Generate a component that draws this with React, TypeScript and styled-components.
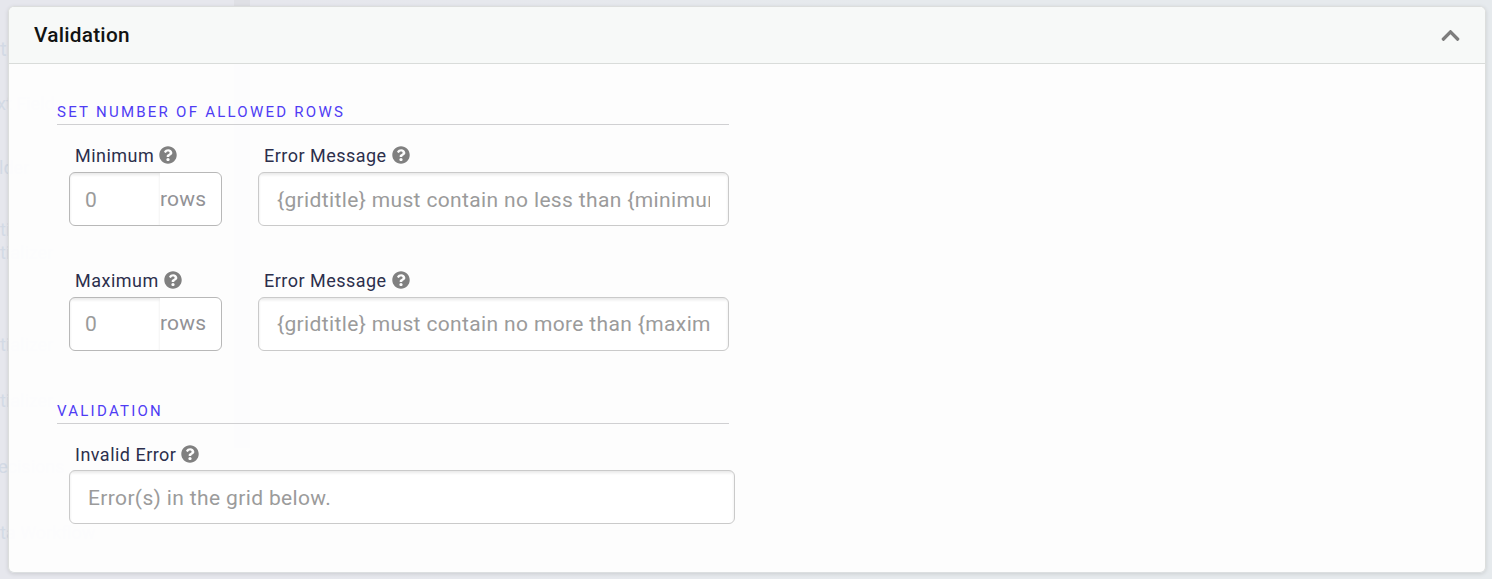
import React from 'react';
import styled, { createGlobalStyle } from 'styled-components';
import { FaQuestionCircle, FaChevronUp } from 'react-icons/fa';

const GlobalStyle = createGlobalStyle`
  *, *::before, *::after { box-sizing: border-box; }
  body {
    margin: 0;
    overflow: hidden;
    font-family: Roboto, sans-serif;
    background: linear-gradient(90deg, #e6e7ed 0, #e6e7ed 265px, #e6eaed 900px);
  }
`;

const Page = styled.div`
  position: relative;
  height: 579px;
  padding: 6px 6px 6px 8px;
`;

const Backdrop = styled.div`
  position: absolute;
  inset: 0;
  overflow: hidden;
`;

const BackdropStrip = styled.div`
  position: absolute;
  left: 234px;
  top: 0;
  width: 16px;
  height: 448px;
  background: #dfe0e5;
`;

const BackdropText = styled.span<{ $x: number; $y: number; $size?: number }>`
  position: absolute;
  left: ${(p) => p.$x}px;
  top: ${(p) => p.$y}px;
  font-size: ${(p) => p.$size ?? 18}px;
  line-height: 20px;
  white-space: nowrap;
  color: #d3dae5;
`;

const Card = styled.section`
  position: relative;
  height: 567px;
  border-radius: 6px;
  border: 1px solid #dcdedd;
  border-bottom-color: #dcdfe0;
  background: rgba(253, 253, 253, 0.97);
  box-shadow: 0 1px 4px rgba(0, 0, 0, 0.12);
`;

const Header = styled.header`
  display: flex;
  align-items: center;
  justify-content: space-between;
  height: 57px;
  padding: 0 24px 1px 25px;
  border-bottom: 1px solid #d9dcda;
  border-radius: 5px 5px 0 0;
  background: #f7f9f8;
`;

const Title = styled.h2`
  margin: 0;
  font-size: 20.8px;
  font-weight: 500;
  letter-spacing: 0.25px;
  line-height: 28px;
  color: #111312;
`;

const Chevron = styled(FaChevronUp)`
  width: 21px;
  height: 21px;
  margin-top: 1px;
  color: #7d7d7d;
`;

const Content = styled.div`
  width: 720px;
  padding: 36px 0 0 48px;
`;

const SectionTitle = styled.h3`
  margin: 0;
  height: 25px;
  border-bottom: 1px solid #d0d0d2;
  font-size: 15px;
  font-weight: 400;
  letter-spacing: 2.25px;
  line-height: 25px;
  text-transform: uppercase;
  color: #4f3cf4;
`;

const FieldRow = styled.div<{ $gapBelow?: number }>`
  display: flex;
  gap: 36px;
  padding: 18px 0 0 12px;
  margin-bottom: ${(p) => p.$gapBelow ?? 0}px;
`;

const Field = styled.div<{ $width: number }>`
  flex: 0 0 ${(p) => p.$width}px;
  width: ${(p) => p.$width}px;
  min-width: 0;
`;

const Label = styled.label<{ $tight?: boolean }>`
  display: flex;
  align-items: center;
  gap: 5px;
  height: ${(p) => (p.$tight ? 28 : 29)}px;
  padding: 0 0 ${(p) => (p.$tight ? 3 : 4)}px 6px;
  font-size: 18px;
  letter-spacing: 0.48px;
  line-height: 25px;
  color: #2c2f4c;
`;

const HelpIcon = styled(FaQuestionCircle)`
  width: 18px;
  height: 18px;
  margin-bottom: 2px;
  color: #808080;
`;

const Control = styled.div<{ $strong?: boolean }>`
  display: flex;
  height: 54px;
  overflow: hidden;
  border: 1px solid ${(p) => (p.$strong ? '#b8b8b8' : '#cacaca')};
  border-radius: 6px;
  background: #fff;
`;

const Input = styled.input<{ $inset: number; $drop?: number }>`
  flex: 1;
  min-width: 0;
  padding: ${(p) => p.$drop ?? 0}px ${(p) => p.$inset}px 0;
  border: 0;
  outline: 0;
  font: 400 21px Roboto, sans-serif;
  letter-spacing: 0.36px;
  color: #2c2f4c;
  background: transparent;
  box-shadow: inset 0 2px 3px rgba(0, 0, 0, 0.09);
  &::placeholder { color: #9b9b9b; opacity: 1; }
`;

const Suffix = styled.span<{ $lift?: number }>`
  width: 61px;
  font-size: 21px;
  letter-spacing: 0.2px;
  line-height: ${(p) => 52 - 2 * (p.$lift ?? 0)}px;
  color: #929296;
`;

const behind = [
  { text: 'tly', x: 0, y: 39, size: 20 },
  { text: 'xt Field', x: -3, y: 94 },
  { text: 'lder', x: -1, y: 158 },
  { text: 'ti', x: 0, y: 220 },
  { text: 'tializer', x: 0, y: 243 },
  { text: 'tializer', x: 0, y: 335 },
  { text: 'tializer', x: 0, y: 391 },
  { text: 'ecisions', x: -2, y: 457 },
  { text: 'ta Workflow', x: 0, y: 523 },
];

interface TextFieldProps {
  label: string;
  placeholder: string;
  width: number;
  suffix?: string;
  tight?: boolean;
  drop?: number;
  lift?: number;
}

function TextField({ label, placeholder, width, suffix, tight, drop, lift }: TextFieldProps) {
  return (
    <Field $width={width}>
      <Label $tight={tight}>
        {label}
        <HelpIcon />
      </Label>
      <Control $strong={Boolean(suffix)}>
        <Input
          aria-label={label}
          placeholder={placeholder}
          $inset={suffix ? 15 : 18}
          $drop={drop}
        />
        {suffix && <Suffix $lift={lift}>{suffix}</Suffix>}
      </Control>
    </Field>
  );
}

export default function App() {
  return (
    <Page>
      <GlobalStyle />
      <Backdrop aria-hidden>
        <BackdropStrip />
        {behind.map((b) => (
          <BackdropText key={b.y} $x={b.x} $y={b.y} $size={b.size}>
            {b.text}
          </BackdropText>
        ))}
      </Backdrop>
      <Card>
        <Header>
          <Title>Validation</Title>
          <Chevron />
        </Header>
        <Content>
          <SectionTitle>Set number of allowed rows</SectionTitle>
          <FieldRow $gapBelow={24}>
            <TextField label="Minimum" placeholder="0" width={153} suffix="rows" drop={2} />
            <TextField
              label="Error Message"
              placeholder="{gridtitle} must contain no less than {minimum} rows."
              width={471}
              drop={2}
            />
          </FieldRow>
          <FieldRow $gapBelow={48}>
            <TextField label="Maximum" placeholder="0" width={153} suffix="rows" lift={1} />
            <TextField
              label="Error Message"
              placeholder="{gridtitle} must contain no more than {maximum} rows."
              width={471}
            />
          </FieldRow>
          <SectionTitle>Validation</SectionTitle>
          <FieldRow>
            <TextField
              label="Invalid Error"
              placeholder="Error(s) in the grid below."
              width={666}
              tight
              drop={2}
            />
          </FieldRow>
        </Content>
      </Card>
    </Page>
  );
}
